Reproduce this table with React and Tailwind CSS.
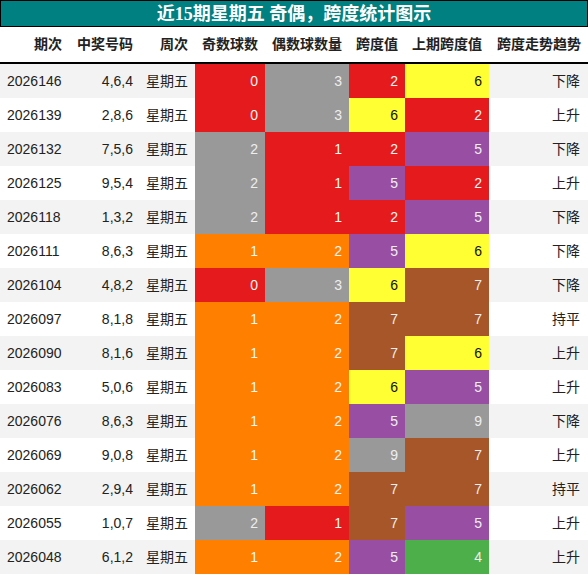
const C = {
  red: "bg-[#e41a1c] text-[#f5f5f5]",
  orange: "bg-[#ff7f00] text-[#f5f5f5]",
  gray: "bg-[#999999] text-[#eeeeee]",
  yellow: "bg-[#ffff33] text-[#111111]",
  purple: "bg-[#984ea3] text-[#eeeeee]",
  brown: "bg-[#a65628] text-[#eeeeee]",
  green: "bg-[#4daf4a] text-[#eeeeee]",
};

const oddC = { 0: C.red, 1: C.orange, 2: C.gray, 3: C.purple };
const evenC = { 3: C.gray, 2: C.orange, 1: C.red, 0: C.purple };
const spanC = { 2: C.red, 4: C.green, 5: C.purple, 6: C.yellow, 7: C.brown, 9: C.gray, 8: C.orange, 3: C.orange };

const rows = [
  ["2026146", "4,6,4", 0, 3, 2, 6, "下降"],
  ["2026139", "2,8,6", 0, 3, 6, 2, "上升"],
  ["2026132", "7,5,6", 2, 1, 2, 5, "下降"],
  ["2026125", "9,5,4", 2, 1, 5, 2, "上升"],
  ["2026118", "1,3,2", 2, 1, 2, 5, "下降"],
  ["2026111", "8,6,3", 1, 2, 5, 6, "下降"],
  ["2026104", "4,8,2", 0, 3, 6, 7, "下降"],
  ["2026097", "8,1,8", 1, 2, 7, 7, "持平"],
  ["2026090", "8,1,6", 1, 2, 7, 6, "上升"],
  ["2026083", "5,0,6", 1, 2, 6, 5, "上升"],
  ["2026076", "8,6,3", 1, 2, 5, 9, "下降"],
  ["2026069", "9,0,8", 1, 2, 9, 7, "上升"],
  ["2026062", "2,9,4", 1, 2, 7, 7, "持平"],
  ["2026055", "1,0,7", 2, 1, 7, 5, "上升"],
  ["2026048", "6,1,2", 1, 2, 5, 4, "上升"],
];

const grid = "grid grid-cols-[69px_71px_55px_70px_84px_56px_84px_99px]";

export default function App() {
  const headers = ["期次", "中奖号码", "周次", "奇数球数", "偶数球数量", "跨度值", "上期跨度值", "跨度走势趋势"];
  return (
    <div className="w-[588px] h-[575px] bg-white overflow-hidden font-['Liberation_Sans','Noto_Sans_CJK_SC',sans-serif] text-[14px] text-[#222]">
      <div className="h-[27px] bg-[#008080] border border-black flex items-center justify-center text-white font-bold text-[18px] font-['Liberation_Serif','Noto_Sans_CJK_SC',serif] leading-none">
        近15期星期五 奇偶，跨度统计图示
      </div>
      <div className={`${grid} h-[37px] border-b-2 border-black font-bold text-[14px] text-[#222]`}>
        {headers.map((h) => (
          <div key={h} className="flex items-center justify-end pr-[7px] whitespace-nowrap">{h}</div>
        ))}
      </div>
      {rows.map((r, i) => {
        const bg = i % 2 === 0 ? "bg-[#f3f3f3]" : "bg-white";
        return (
          <div key={r[0]} className={`${grid} h-[34px] ${bg}`}>
            <div className="flex items-center pl-[7px]">{r[0]}</div>
            <div className="flex items-center justify-end pr-[7px]">{r[1]}</div>
            <div className="flex items-center justify-end pr-[7px]">星期五</div>
            <div className={`flex items-center justify-end pr-[7px] ${oddC[r[2]]}`}>{r[2]}</div>
            <div className={`flex items-center justify-end pr-[7px] ${evenC[r[3]]}`}>{r[3]}</div>
            <div className={`flex items-center justify-end pr-[7px] ${spanC[r[4]]}`}>{r[4]}</div>
            <div className={`flex items-center justify-end pr-[7px] ${spanC[r[5]]}`}>{r[5]}</div>
            <div className="flex items-center justify-end pr-[8px]">{r[6]}</div>
          </div>
        );
      })}
    </div>
  );
}
